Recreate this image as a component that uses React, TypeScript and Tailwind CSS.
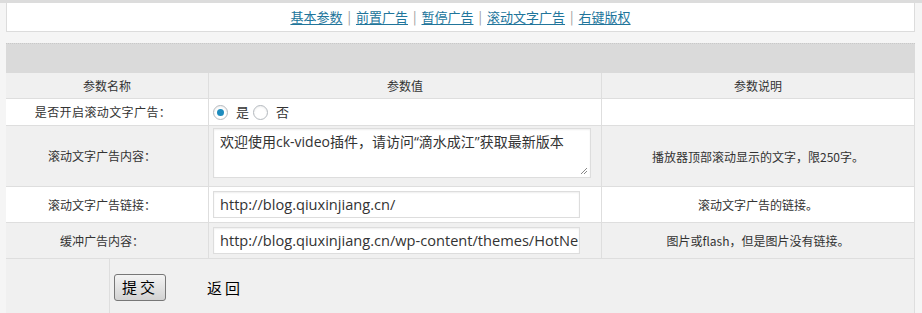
import React from "react";

const cjk = { fontFamily: '"Noto Sans CJK SC", "Liberation Sans", sans-serif' };
const mixed = { fontFamily: '"Open Sans", "Noto Sans CJK SC", sans-serif' };

function Radio({ checked }: { checked?: boolean }) {
  return (
    <span className="inline-flex h-[15px] w-[15px] items-center justify-center rounded-full border border-[#b4b9be] bg-white shadow-[inset_0_1px_2px_rgba(0,0,0,0.07)]">
      {checked && <span className="h-[7px] w-[7px] rounded-full bg-[#1e8cbe]" />}
    </span>
  );
}

export default function App() {
  const links = ["基本参数", "前置广告", "暂停广告", "滚动文字广告", "右键版权"];
  return (
    <div
      className="h-[313px] w-[922px] overflow-hidden border-t-[3px] border-[#dcdcdc] bg-[#f5f5f5] pl-[6px] pr-[7px] text-[12px] text-[#333]"
      style={cjk}
    >
      <div className="flex h-[29px] items-center justify-center border-b border-l border-r border-[#dcdcdc] bg-white text-[13px]">
        {links.map((l, i) => (
          <React.Fragment key={l}>
            {i > 0 && <span className="mx-[5px] text-[#999]">|</span>}
            <a className="text-[#21759b] underline underline-offset-2">{l}</a>
          </React.Fragment>
        ))}
      </div>
      <div className="mt-[11px] h-[30px] border-t border-dotted border-[#c8c8c8] bg-[#dadada]" />
      <div className="border-r border-[#dedede]">
        <div className="grid h-[25px] grid-cols-[203px_393px_1fr] bg-[#f0f0f0]">
          <div className="flex items-center justify-center border-r border-[#dedede]">参数名称</div>
          <div className="flex items-center justify-center border-r border-[#dedede]">参数值</div>
          <div className="flex items-center justify-center">参数说明</div>
        </div>
        <div className="grid h-[27px] grid-cols-[203px_393px_1fr] border-t border-[#dedede] bg-white">
          <div className="flex items-center justify-center border-r border-[#dedede] pr-[8px] tracking-[0.4px]">是否开启滚动文字广告：</div>
          <div className="flex items-center border-r border-[#dedede] pl-[4px] text-[13px]">
            <Radio checked />
            <span className="ml-[8px] mr-[4px]">是</span>
            <Radio />
            <span className="ml-[8px]">否</span>
          </div>
          <div />
        </div>
        <div className="grid h-[61px] grid-cols-[203px_393px_1fr] border-t border-[#dedede] bg-[#f0f0f0]">
          <div className="flex items-center justify-center border-r border-[#dedede] pr-[10px]">滚动文字广告内容：</div>
          <div className="flex items-start border-r border-[#dedede] pl-[4px] pt-[2px]">
            <div
              className="relative h-[50px] w-[378px] border border-[#dddddd] bg-white px-[6px] pt-[3px] text-[14px] leading-[20px] text-[#333] shadow-[inset_0_1px_2px_rgba(0,0,0,0.07)]"
              style={mixed}
            >
              欢迎使用ck-video插件，请访问“滴水成江”获取最新版本
              <svg className="absolute bottom-[2px] right-[2px]" width="8" height="8" viewBox="0 0 8 8">
                <path d="M7 1L1 7M7 4L4 7" stroke="#888" strokeWidth="1" />
              </svg>
            </div>
          </div>
          <div className="flex items-center justify-center pt-[2px]">播放器顶部滚动显示的文字，限250字。</div>
        </div>
        <div className="grid h-[36px] grid-cols-[203px_393px_1fr] border-t border-[#dedede] bg-white">
          <div className="flex items-center justify-center border-r border-[#dedede] pr-[10px]">滚动文字广告链接：</div>
          <div className="flex items-center border-r border-[#dedede] pl-[4px]">
            <div
              className="flex h-[27px] w-[367px] items-center overflow-hidden whitespace-nowrap border border-[#dddddd] bg-white px-[6px] text-[14.6px] text-[#333] shadow-[inset_0_1px_2px_rgba(0,0,0,0.07)]"
              style={mixed}
            >
              http://blog.qiuxinjiang.cn/
            </div>
          </div>
          <div className="flex items-center justify-center">滚动文字广告的链接。</div>
        </div>
        <div className="grid h-[36px] grid-cols-[203px_393px_1fr] border-t border-[#dedede] bg-[#f0f0f0]">
          <div className="flex items-center justify-center border-r border-[#dedede] pr-[10px]">缓冲广告内容：</div>
          <div className="flex items-center border-r border-[#dedede] pl-[4px]">
            <div
              className="flex h-[27px] w-[367px] items-center overflow-hidden whitespace-nowrap border border-[#dddddd] bg-white px-[6px] text-[14.6px] text-[#333] shadow-[inset_0_1px_2px_rgba(0,0,0,0.07)]"
              style={mixed}
            >
              http://blog.qiuxinjiang.cn/wp-content/themes/HotNe
            </div>
          </div>
          <div className="flex items-center justify-center">图片或flash，但是图片没有链接。</div>
        </div>
        <div className="grid h-[60px] grid-cols-[104px_1fr] border-t border-[#dedede] bg-[#f0f0f0]">
          <div className="border-r border-[#dedede]" />
          <div className="flex items-start pl-[4px] pt-[15px]">
            <button className="flex h-[27px] w-[52px] items-center justify-center rounded-[3px] border border-[#777] bg-gradient-to-b from-[#f4f4f4] to-[#d2d2d2] text-[15px] tracking-[3px] text-black">
              提交
            </button>
            <span className="ml-[41px] mt-[3px] text-[15px] tracking-[3px] text-black">返回</span>
          </div>
        </div>
      </div>
    </div>
  );
}
